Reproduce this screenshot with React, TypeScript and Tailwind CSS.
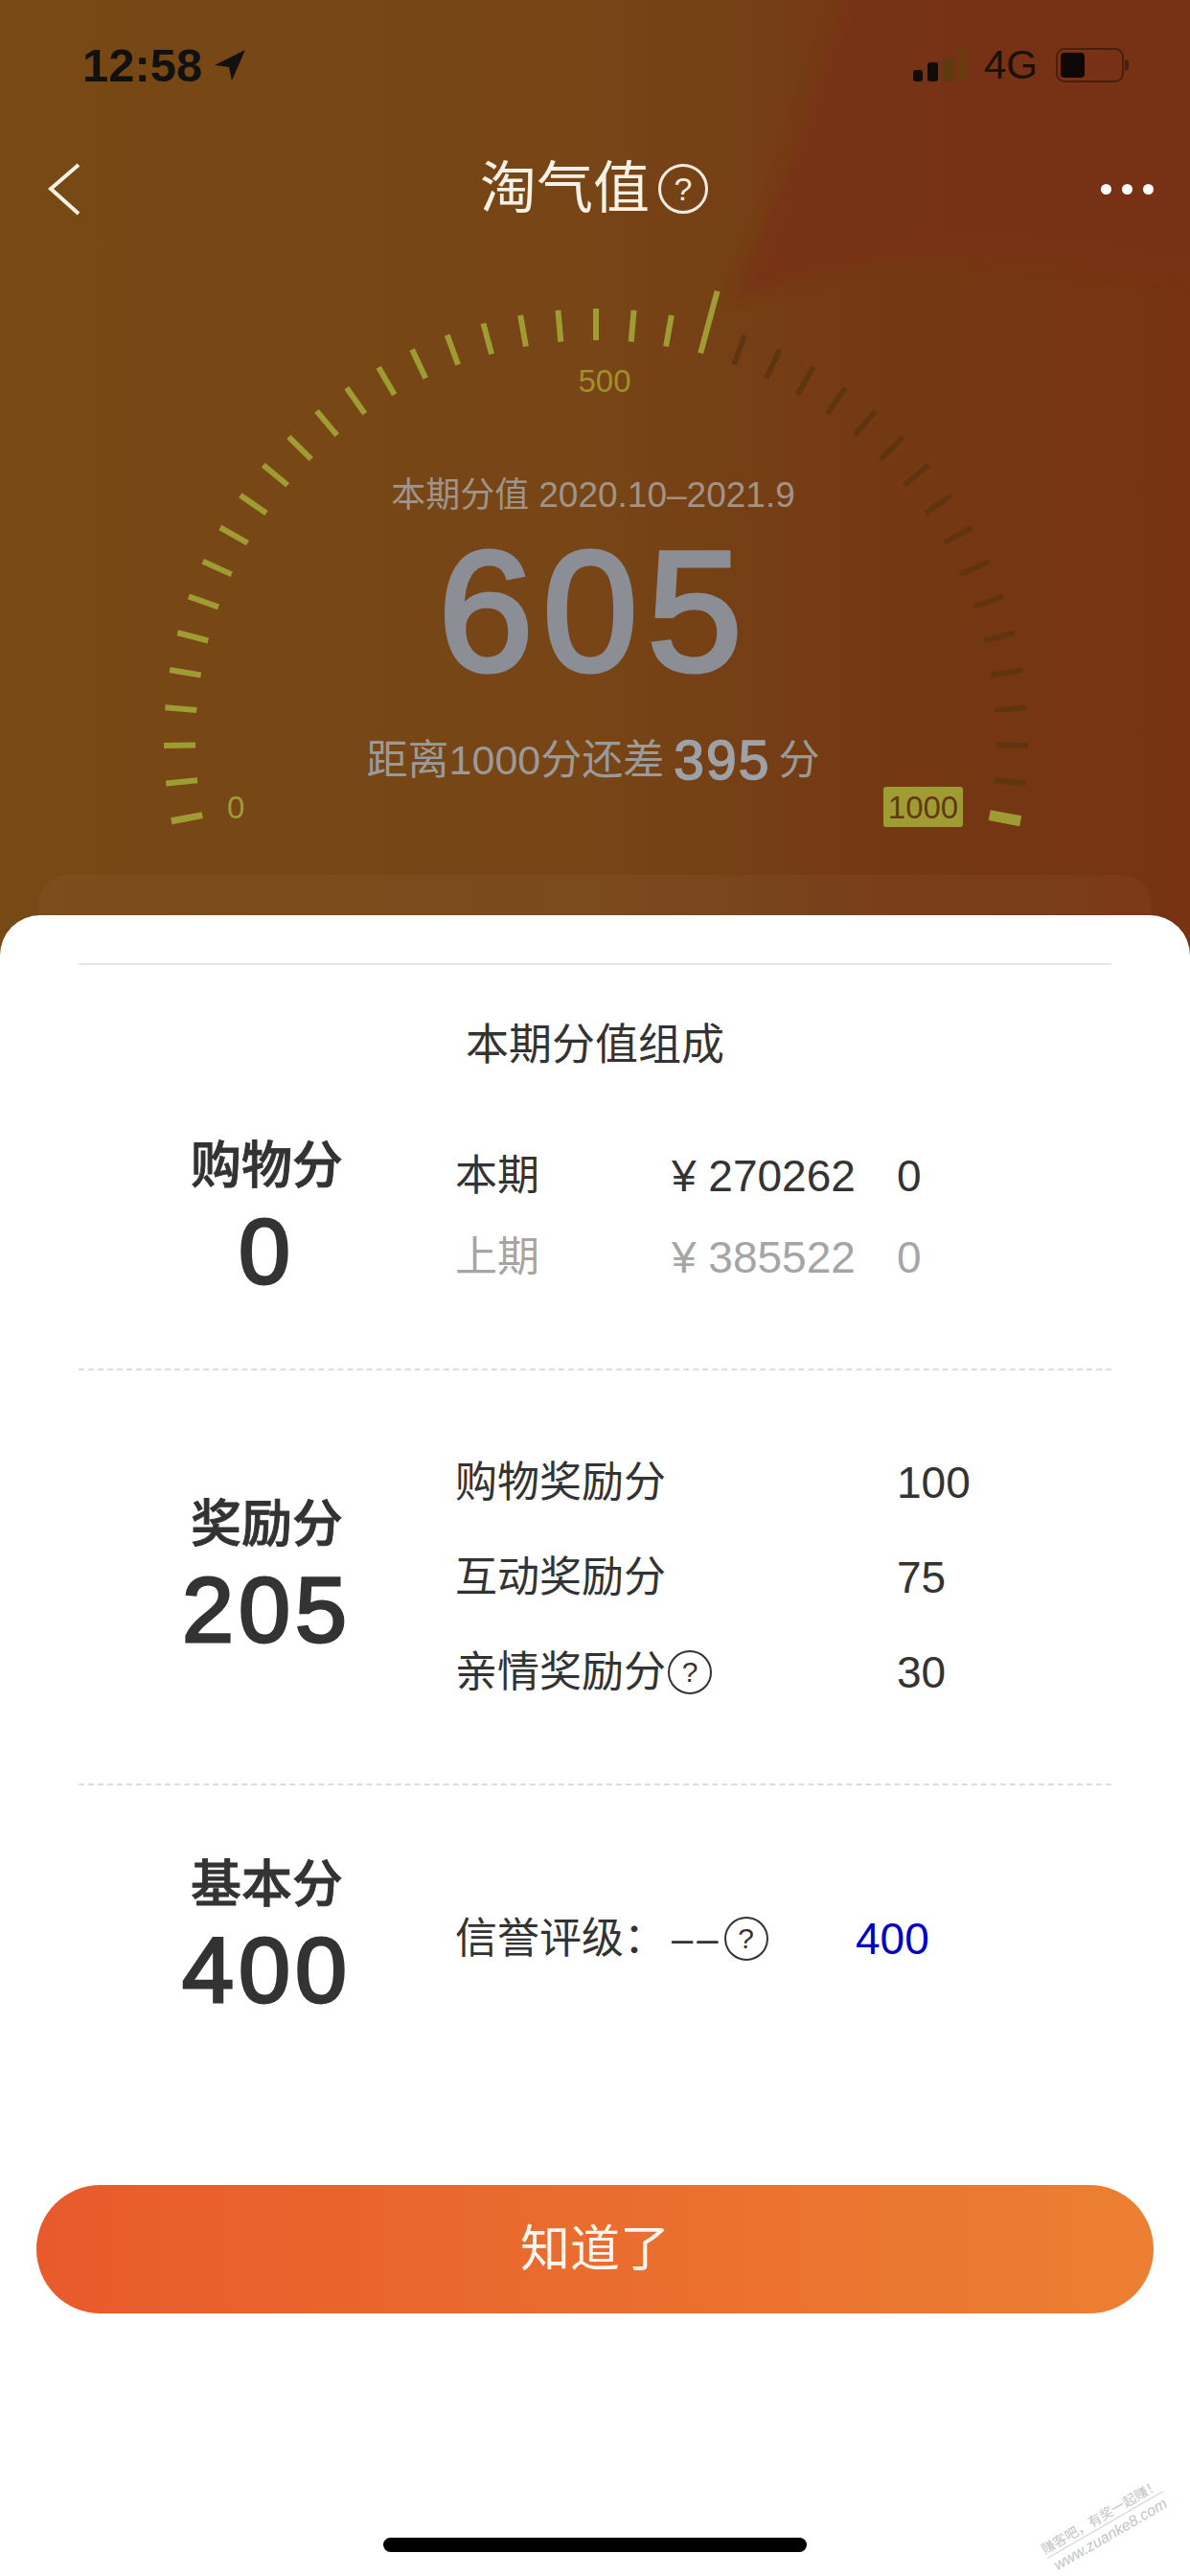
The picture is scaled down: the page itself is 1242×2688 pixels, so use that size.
const FONT = "font-['Liberation_Sans','Noto_Sans_CJK_SC',sans-serif]"

const TICK_COUNT = 41
const CENTER_X = 622
const CENTER_Y = 773
const START_ANGLE = -100.7
const STEP = 5.035

function Gauge() {
  const ticks = Array.from({ length: TICK_COUNT }, (_, i) => {
    const rad = ((START_ANGLE + i * STEP) * Math.PI) / 180
    const isCurrent = i === 23
    const isLast = i === TICK_COUNT - 1
    const outer = isCurrent ? 486 : 451
    const inner = isCurrent ? 419 : 418
    const active = i <= 23 || isLast
    return {
      x1: CENTER_X + Math.sin(rad) * inner,
      y1: CENTER_Y - Math.cos(rad) * inner,
      x2: CENTER_X + Math.sin(rad) * outer,
      y2: CENTER_Y - Math.cos(rad) * outer,
      color: active ? '#a09c34' : '#5f3410',
      width: isLast ? 11 : i === 0 ? 7 : active ? 6 : 5.5,
    }
  })
  return (
    <svg className="absolute left-0 top-0" width="1242" height="955" viewBox="0 0 1242 955">
      <defs>
        <filter id="soft" x="-10%" y="-10%" width="120%" height="120%">
          <feGaussianBlur stdDeviation="8" />
        </filter>
      </defs>
      {/* 右上角深色色塊 */}
      <path d="M886 -30 C850 110 810 210 767 311 C850 285 930 268 997 268 C1090 268 1170 280 1262 293 L1262 -30 Z" fill="#783212" opacity="0.85" filter="url(#soft)" />
      {ticks.map((t, i) => (
        <line key={i} x1={t.x1} y1={t.y1} x2={t.x2} y2={t.y2} stroke={t.color} strokeWidth={t.width} />
      ))}
    </svg>
  )
}

function HelpIcon() {
  return (
    <span className="ml-[2px] flex h-[46px] w-[46px] shrink-0 items-center justify-center rounded-full border-2 border-[#333333] text-[30px] leading-none text-[#333333]">
      ?
    </span>
  )
}

function StatusBar() {
  return (
    <div className="mt-[50px] flex h-[36px] items-center justify-between pl-[86px] pr-[64px]">
      <div className="flex items-center gap-[12px]">
        <span className="text-[49px] font-bold leading-none text-[#111111]">12:58</span>
        <svg width="34" height="34" viewBox="0 0 34 34">
          <path d="M33 1 L1 17 L16 19 L19 33 Z" fill="#111111" />
        </svg>
      </div>
      <div className="flex items-center">
        <svg width="56" height="36" viewBox="0 0 56 36">
          <rect x="0" y="23" width="10" height="12" rx="3" fill="#120b06" />
          <rect x="15" y="15" width="11" height="20" rx="3" fill="#120b06" />
          <rect x="31" y="10" width="12" height="25" rx="3" fill="#5f3a10" />
          <rect x="46" y="0" width="10" height="35" rx="3" fill="#6a3a10" />
        </svg>
        <span className="ml-[18px] text-[42px] leading-none text-[#1c1008]">4G</span>
        <div className="ml-[19px] flex items-center">
          <div className="flex h-[36px] w-[71px] rounded-[9px] border-2 border-[#4a1f0a] p-[3px]">
            <div className="w-[25px] rounded-[4px] bg-[#0d0805]" />
          </div>
          <div className="ml-[1px] h-[12px] w-[4px] rounded-r-full bg-[#4a1f0a]" />
        </div>
      </div>
    </div>
  )
}

function NavBar() {
  return (
    <div className="relative mt-[81px] flex h-[60px] items-center justify-center pr-[2px]">
      <svg className="absolute left-[47px] top-[3px]" width="40" height="56" viewBox="0 0 40 56" fill="none" stroke="#f8f1e6" strokeWidth="4">
        <path d="M35 2 L6 27 L35 53" />
      </svg>
      <span className="text-[59px] leading-none text-[#f8f1e6]">淘气值</span>
      <span className="ml-[9px] flex h-[52px] w-[52px] items-center justify-center rounded-full border-[3px] border-[#f5ece0] text-[34px] leading-none text-[#f5ece0]">
        ?
      </span>
      <div className="absolute right-[38px] top-[25px] flex gap-[11px]">
        <span className="h-[11px] w-[11px] rounded-full bg-white" />
        <span className="h-[11px] w-[11px] rounded-full bg-white" />
        <span className="h-[11px] w-[11px] rounded-full bg-white" />
      </div>
    </div>
  )
}

function Hero() {
  return (
    <div className="relative h-[955px]">
      <Gauge />
      <div className="relative flex h-full flex-col">
        <StatusBar />
        <NavBar />
        <div className="mt-[151px] h-[40px] pl-[20px] text-center text-[33px] leading-[40px] text-[#a08f2a]">500</div>
        <div className="mt-[77px] h-[44px] pr-[4px] text-center text-[36px] leading-[44px] text-[#a09488]">
          本期分值 <span className="text-[37px]">2020.10–2021.9</span>
        </div>
        <div className="mt-[31px] h-[136px] text-center text-[178px] leading-[136px] tracking-[10px] text-[#8b8f95] [-webkit-text-stroke:5px_#8b8f95]">
          605
        </div>
        <div className="mt-[59px] flex h-[56px] items-center justify-center pr-[4px] text-[43px] leading-none text-[#9c9a98]">
          距离1000分还差
          <span className="ml-[10px] mr-[8px] text-[57px] tracking-[2px] text-[#9ea2a7] [-webkit-text-stroke:1.6px_#9ea2a7]">395</span>
          分
        </div>
        <div className="flex h-[42px] items-center justify-between px-[237px]">
          <span className="text-[33px] leading-none text-[#a09c34]">0</span>
          <span className="flex h-[42px] w-[83px] items-center justify-center rounded-[3px] bg-[#a09c34] text-[33px] leading-none text-[#643710]">
            1000
          </span>
        </div>
        {/* 白卡後方露出的卡片 */}
        <div className="mx-[40px] mt-[50px] flex-1 rounded-t-[30px] bg-white/[0.03]" />
      </div>
    </div>
  )
}

function ScoreTitle({ label, value, className = '' }: { label: string; value: string; className?: string }) {
  return (
    <div className={`flex flex-col items-center ${className}`}>
      <span className="h-[60px] text-[53px] font-medium leading-[60px] text-[#333333] [-webkit-text-stroke:0.9px_#333333]">{label}</span>
      <span className="h-[118px] text-[97px] leading-[118px] tracking-[5px] text-[#333333] [-webkit-text-stroke:3px_#333333]">{value}</span>
    </div>
  )
}

function Row({ label, value, help }: { label: string; value: string; help?: boolean }) {
  return (
    <div className="flex h-[46px] items-center text-[44px] leading-none text-[#333333]">
      <div className="flex w-[461px] items-center">
        {label}
        {help && <HelpIcon />}
      </div>
      <span className="text-[46px]">{value}</span>
    </div>
  )
}

function AmountRow({ label, amount, score, muted }: { label: string; amount: string; score: string; muted?: boolean }) {
  return (
    <div className={`flex h-[46px] items-center text-[44px] leading-none ${muted ? 'text-[#a5a5a5]' : 'text-[#333333]'}`}>
      <span className="w-[226px]">{label}</span>
      <span className="w-[235px] text-[46px]">{amount}</span>
      <span className="text-[46px]">{score}</span>
    </div>
  )
}

function Sheet() {
  return (
    <div className="relative flex flex-1 flex-col rounded-t-[42px] bg-white px-[38px] pt-[50px]">
      <div className="mx-[44px] border-t-2 border-[#e6e6e6]">
        <div className="flex h-[166px] items-center justify-center text-[45px] leading-none text-[#333333]">本期分值组成</div>

        <div className="grid h-[257px] grid-cols-[393px_1fr] items-center border-b-2 border-dashed border-[#dddddd] pb-[50px]">
          <ScoreTitle label="购物分" value="0" />
          <div className="mb-[12px] flex flex-col gap-[39px]">
            <AmountRow label="本期" amount="¥ 270262" score="0" />
            <AmountRow label="上期" amount="¥ 385522" score="0" muted />
          </div>
        </div>

        <div className="grid h-[433px] grid-cols-[393px_1fr] items-center border-b-2 border-dashed border-[#dddddd]">
          <ScoreTitle label="奖励分" value="205" className="pt-[8px]" />
          <div className="flex flex-col gap-[53px]">
            <Row label="购物奖励分" value="100" />
            <Row label="互动奖励分" value="75" />
            <Row label="亲情奖励分" value="30" help />
          </div>
        </div>

        <div className="grid h-[326px] grid-cols-[393px_1fr] items-center">
          <ScoreTitle label="基本分" value="400" />
          <div className="mb-[6px] flex h-[46px] items-center text-[44px] leading-none text-[#333333]">
            <div className="flex w-[418px] items-center">
              信誉评级：<span className="ml-[6px] text-[40px] tracking-[4px]">––</span>
              <HelpIcon />
            </div>
            <span className="text-[46px] text-[#0000c4]">400</span>
          </div>
        </div>
      </div>

      <button
        type="button"
        className="mt-[91px] flex h-[134px] w-full items-center justify-center rounded-full bg-[linear-gradient(90deg,#e85a2c,#ec7f31)] text-[52px] leading-none text-[#fdf6ee]"
      >
        知道了
      </button>

      <div className="mx-auto mt-[234px] h-[15px] w-[442px] rounded-full bg-black" />

      {/* 論壇浮水印 */}
      <div className="absolute bottom-[34px] right-[18px] flex -rotate-[30deg] flex-col items-center gap-[3px] text-[#c4c4c4]">
        <span className="border-b border-[#d4d4d4] pb-[2px] text-[14px] leading-none">赚客吧，有奖一起赚！</span>
        <span className="text-[16px] italic leading-none">www.zuanke8.com</span>
      </div>
    </div>
  )
}

export default function App() {
  return (
    <div className={`flex h-[2688px] w-[1242px] flex-col overflow-hidden bg-[linear-gradient(90deg,#774914,#774516_50%,#743a14_72%,#773312)] ${FONT}`}>
      <Hero />
      <Sheet />
    </div>
  )
}
